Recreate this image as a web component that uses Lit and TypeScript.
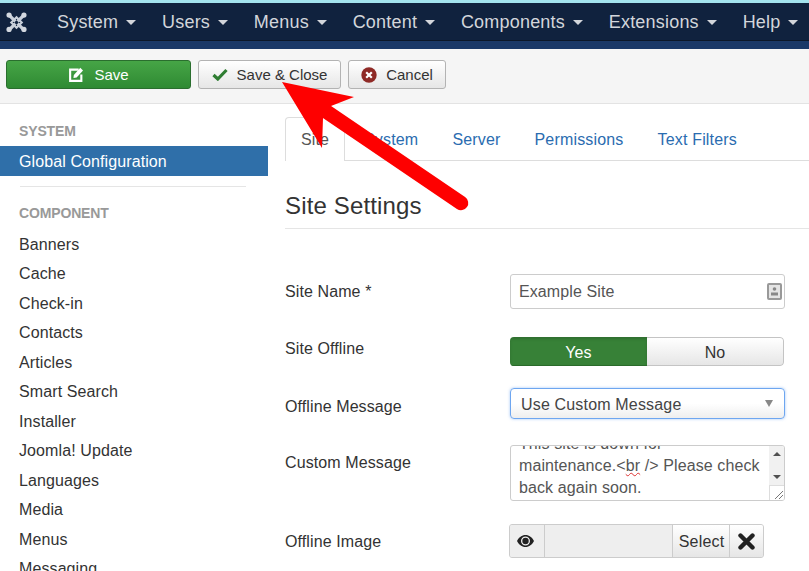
import { LitElement, html, css, svg } from 'lit';
import { customElement } from 'lit/decorators.js';

const NAV = ['System', 'Users', 'Menus', 'Content', 'Components', 'Extensions', 'Help'];
const COMPONENTS = ['Banners', 'Cache', 'Check-in', 'Contacts', 'Articles', 'Smart Search', 'Installer',
  'Joomla! Update', 'Languages', 'Media', 'Menus', 'Messaging'];
const TABS = ['Site', 'System', 'Server', 'Permissions', 'Text Filters'];

const logo = svg`
  <g fill="none" stroke="#c9d0da" stroke-linecap="round">
    <path d="M5 6 L19 20" stroke-width="3.800"/><path d="M19 6 L5 20" stroke-width="3.800"/>
    <path d="M6 13 L12 7 L18 13 L12 19 Z" stroke-width="2.400"/>
  </g>
  <path d="M9.500 13 12 10.500 14.500 13 12 15.500z" fill="#10223e"/>
  <g fill="#d3d8df">
    <circle cx="3.500" cy="4.500" r="3"/><circle cx="20.500" cy="4.500" r="3"/>
    <circle cx="3.500" cy="21" r="3"/><circle cx="20.500" cy="21" r="3"/>
  </g>`;

@customElement('app-root')
export class AppRoot extends LitElement {
  static styles = css`
    :host {
      display: block;
      position: relative;
      width: 809px;
      height: 571px;
      overflow: hidden;
      background: #fff;
      font-family: 'Liberation Sans', Arial, sans-serif;
      font-size: 16px;
      letter-spacing: .1px;
      color: #333;
    }
    .strip { height: 3px; background: #a3e3ee; }
    .nav {
      display: flex;
      align-items: center;
      height: 38px;
      background: #10223e;
      border-bottom: 1px solid #0b1729;
      box-sizing: border-box;
      padding-left: 6px;
      white-space: nowrap;
    }
    .logo { width: 21px; height: 24px; margin-right: 30px; flex: none; }
    .nav-links { display: flex; gap: 25.8px; padding-top: 1px; }
    .nav-link {
      display: flex;
      align-items: center;
      gap: 8px;
      font-size: 18px;
      letter-spacing: .2px;
      color: #d3d6db;
    }
    .caret {
      width: 0;
      height: 0;
      border-left: 5px solid transparent;
      border-right: 5px solid transparent;
      border-top: 5px solid #d3d6db;
      margin-top: 1px;
    }
    .band { height: 8px; background: #1a3867; }
    .toolbar {
      display: flex;
      gap: 7px;
      height: 55px;
      box-sizing: border-box;
      padding: 11px 6px 0;
      background: #f5f5f5;
      border-bottom: 1px solid #e3e3e3;
    }
    .btn {
      display: flex;
      align-items: center;
      justify-content: center;
      gap: 9px;
      height: 29px;
      box-sizing: border-box;
      font-size: 15px;
      letter-spacing: 0;
      color: #333;
      background: linear-gradient(#fff, #e6e6e6);
      border: 1px solid #b3b3b3;
      border-radius: 3px;
    }
    .btn svg { display: block; flex: none; }
    .btn-save {
      width: 185px;
      color: #fff;
      gap: 10px;
      background: linear-gradient(#46a546, #2f8a33);
      border-color: #2a6e2e;
    }
    .btn-close { width: 143px; }
    .btn-cancel { width: 98px; }
    .body { display: flex; }
    .sidebar { width: 268px; flex: none; padding-top: 18px; }
    .side-head {
      height: 18px;
      line-height: 18px;
      padding-left: 19px;
      font-size: 14px;
      font-weight: 700;
      letter-spacing: -.15px;
      color: #999;
    }
    .side-active {
      height: 30px;
      line-height: 32px;
      margin-top: 6px;
      padding-left: 19px;
      background: #2f6fa9;
      color: #fff;
    }
    .side-rule { height: 1px; margin: 10px 22px 17px 20px; background: #e5e5e5; }
    .side-list { margin-top: 7.7px; }
    .side-item { height: 29.5px; line-height: 29.5px; padding-left: 19px; color: #333; }
    .main { flex: 1; padding: 13px 0 0 17px; min-width: 0; }
    .tabs {
      display: flex;
      height: 44px;
      box-sizing: border-box;
      border-bottom: 1px solid #ddd;
    }
    .tab { padding: 0 17px; line-height: 46px; letter-spacing: .17px; color: #2a6cb0; }
    .tab-active {
      height: 44px;
      box-sizing: border-box;
      padding: 0 15px;
      width: 60px;
      margin-right: 2px;
      line-height: 44px;
      color: #555;
      background: #fff;
      border: 1px solid #ddd;
      border-bottom: none;
      border-radius: 4px 4px 0 0;
    }
    h2 {
      margin: 0;
      padding-top: 31px;
      height: 68px;
      box-sizing: border-box;
      font-size: 24px;
      font-weight: 400;
      letter-spacing: .15px;
      line-height: 28px;
      border-bottom: 1px solid #e5e5e5;
    }
    .row { display: flex; align-items: flex-start; }
    .label { width: 225px; flex: none; padding-top: 8px; line-height: 20px; color: #333; }
    .label-tight { padding-top: 2px; }
    .label-low { padding-top: 9px; }
    .r-name { margin-top: 45px; }
    .r-offline { margin-top: 28px; }
    .r-message { margin-top: 22px; }
    .r-custom { margin-top: 26px; }
    .r-image { margin-top: 23px; }
    .input {
      display: flex;
      align-items: center;
      justify-content: space-between;
      width: 275px;
      height: 35px;
      box-sizing: border-box;
      padding: 0 2px 0 8px;
      background: #fff;
      border: 1px solid #ccc;
      border-radius: 3px;
      color: #555;
    }
    .toggle {
      display: flex;
      width: 274px;
      height: 29px;
      box-sizing: border-box;
      border-radius: 4px;
      overflow: hidden;
      text-align: center;
      line-height: 31px;
    }
    .toggle-yes {
      width: 137px;
      color: #fff;
      background: #378137;
      border-bottom: 1px solid #2a6a2a;
      box-shadow: inset 0 2px 3px rgba(0, 0, 0, .15);
    }
    .toggle-no {
      flex: 1;
      color: #333;
      background: linear-gradient(#fff, #e6e6e6);
      border: 1px solid #c4c4c4;
      border-left: none;
      border-radius: 0 4px 4px 0;
      line-height: 29px;
    }
    .select {
      display: flex;
      align-items: center;
      justify-content: space-between;
      width: 275px;
      height: 31px;
      box-sizing: border-box;
      padding: 0 11px 0 10px;
      letter-spacing: .17px;
      background: linear-gradient(#fff 50%, #eee);
      border: 1px solid #6ea6f0;
      border-radius: 4px;
      box-shadow: 0 0 3px rgba(102, 160, 240, .6);
      color: #444;
    }
    .select-text { padding-top: 2px; }
    .select-arrow {
      width: 0;
      height: 0;
      border-left: 4px solid transparent;
      border-right: 4px solid transparent;
      border-top: 7px solid #888;
    }
    .textarea {
      display: flex;
      width: 275px;
      height: 56px;
      box-sizing: border-box;
      background: #fff;
      border: 1px solid #ccc;
      border-radius: 3px;
      overflow: hidden;
    }
    .textarea-text {
      flex: 1;
      margin-top: -13px;
      padding: 0 8px;
      line-height: 22px;
      white-space: nowrap;
      color: #555;
    }
    .typo { text-decoration: underline wavy #d33; text-decoration-thickness: 1px; }
    .scroll { width: 15px; flex: none; display: flex; flex-direction: column; background: #f1f1f1; }
    .scroll-track {
      flex: 1;
      display: flex;
      flex-direction: column;
      align-items: center;
      justify-content: space-between;
      padding: 6px 0;
    }
    .scroll-up {
      width: 0; height: 0;
      border-left: 4px solid transparent;
      border-right: 4px solid transparent;
      border-bottom: 4px solid #505050;
    }
    .scroll-down {
      width: 0; height: 0;
      border-left: 4px solid transparent;
      border-right: 4px solid transparent;
      border-top: 4px solid #505050;
    }
    .scroll-corner { height: 15px; background: #fff; border-top: 1px solid #ddd; border-left: 1px solid #ddd; box-sizing: border-box; }
    .scroll-corner svg { display: block; }
    .media {
      display: flex;
      width: 255px;
      height: 34px;
      box-sizing: border-box;
      margin-left: -1px;
      border: 1px solid #ccc;
      border-radius: 3px;
      overflow: hidden;
      background: #eee;
    }
    .media > div { display: flex; align-items: center; justify-content: center; box-sizing: border-box; }
    .media-eye { width: 35px; padding-right: 4px; border-right: 1px solid #ccc; background: #eee; }
    .media-field { flex: 1; background: #eee; }
    .media-select { width: 57px; padding: 1px 0 0 1px; letter-spacing: .2px; background: linear-gradient(#fff, #e6e6e6); border-left: 1px solid #ccc; color: #333; }
    .media-clear { width: 34px; background: linear-gradient(#fff, #e6e6e6); border-left: 1px solid #ccc; }
    .arrow { position: absolute; left: 0; top: 0; pointer-events: none; }
  `;

  render() {
    return html`
      <div class="strip"></div>
      <div class="nav">
        <svg class="logo" viewBox="0 0 24 25">${logo}</svg>
        <div class="nav-links">
          ${NAV.map((n) => html`<span class="nav-link">${n}<i class="caret"></i></span>`)}
        </div>
      </div>
      <div class="band"></div>
      <div class="toolbar">
        <div class="btn btn-save">
          <svg width="16" height="16" viewBox="0 0 15 15">
            <path d="M10 2.500H2v10.500h10.500V7" fill="none" stroke="#fff" stroke-width="2"/>
            <path d="M5.500 7.500 11.500.8l2.600 2.400-6 6.600-3 .6z" fill="#fff"/>
          </svg>
          Save
        </div>
        <div class="btn btn-close">
          <svg width="16" height="13" viewBox="0 0 16 13">
            <path d="M1.500 7 5.800 11 14.500 2" fill="none" stroke="#2f7d32" stroke-width="3.200"/>
          </svg>
          Save &amp; Close
        </div>
        <div class="btn btn-cancel">
          <svg width="16" height="16" viewBox="0 0 16 16">
            <circle cx="8" cy="8" r="7.700" fill="#8f2a26"/>
            <path d="M5.200 5.200l5.600 5.600M10.800 5.200l-5.600 5.600" stroke="#fff" stroke-width="2.200"/>
          </svg>
          Cancel
        </div>
      </div>
      <div class="body">
        <div class="sidebar">
          <div class="side-head">SYSTEM</div>
          <div class="side-active">Global Configuration</div>
          <div class="side-rule"></div>
          <div class="side-head">COMPONENT</div>
          <div class="side-list">
            ${COMPONENTS.map((c) => html`<div class="side-item">${c}</div>`)}
          </div>
        </div>
        <div class="main">
          <div class="tabs">
            ${TABS.map((t, i) => html`<div class=${i === 0 ? 'tab-active' : 'tab'}>${t}</div>`)}
          </div>
          <h2>Site Settings</h2>
          <div class="row r-name">
            <div class="label">Site Name *</div>
            <div class="input">
              Example Site
              <svg width="15" height="17" viewBox="0 0 15 17">
                <rect x="1" y="1" width="13" height="15" rx="1" fill="#e4e4e4" stroke="#999" stroke-width="2"/>
                <circle cx="7.500" cy="6" r="1.800" fill="#888"/>
                <path d="M4 12.500V9.500h7v3z" fill="#888"/>
              </svg>
            </div>
          </div>
          <div class="row r-offline">
            <div class="label label-tight">Site Offline</div>
            <div class="toggle">
              <div class="toggle-yes">Yes</div>
              <div class="toggle-no">No</div>
            </div>
          </div>
          <div class="row r-message">
            <div class="label label-low">Offline Message</div>
            <div class="select"><span class="select-text">Use Custom Message</span><i class="select-arrow"></i></div>
          </div>
          <div class="row r-custom">
            <div class="label">Custom Message</div>
            <div class="textarea">
              <div class="textarea-text">This site is down for<br />maintenance.&lt;<span class="typo">br</span> /&gt; Please check<br />back again soon.</div>
              <div class="scroll">
                <div class="scroll-track"><i class="scroll-up"></i><i class="scroll-down"></i></div>
                <div class="scroll-corner">
                  <svg width="14" height="14" viewBox="0 0 14 14">
                    <path d="M5 13 13 5M9 13 13 9" stroke="#777" stroke-width="1"/>
                  </svg>
                </div>
              </div>
            </div>
          </div>
          <div class="row r-image">
            <div class="label">Offline Image</div>
            <div class="media">
              <div class="media-eye">
                <svg width="17" height="12" viewBox="0 0 17 12">
                  <path fill-rule="evenodd" fill="#222" d="M8.500 0C4.800 0 1.800 2.400 0 6c1.800 3.600 4.800 6 8.500 6s6.700-2.400 8.500-6C15.200 2.400 12.200 0 8.500 0zM8.500 1.500a4.500 4.500 0 1 1 0 9 4.500 4.500 0 0 1 0-9z"/>
                  <circle cx="8.500" cy="6" r="3.200" fill="#222"/>
                </svg>
              </div>
              <div class="media-field"></div>
              <div class="media-select">Select</div>
              <div class="media-clear">
                <svg width="17" height="17" viewBox="0 0 17 17">
                  <path d="M2.500 2.500l12 12M14.500 2.500l-12 12" stroke="#222" stroke-width="4.400" stroke-linecap="round"/>
                </svg>
              </div>
            </div>
          </div>
        </div>
      </div>
      <svg class="arrow" width="809" height="571" viewBox="0 0 809 571">
        <path d="M282 82 354 97 331 106 323 118 322 148z" fill="#fe0000"/>
        <path d="M327 112 461 203" stroke="#fe0000" stroke-width="14.500" stroke-linecap="round"/>
      </svg>
    `;
  }
}
